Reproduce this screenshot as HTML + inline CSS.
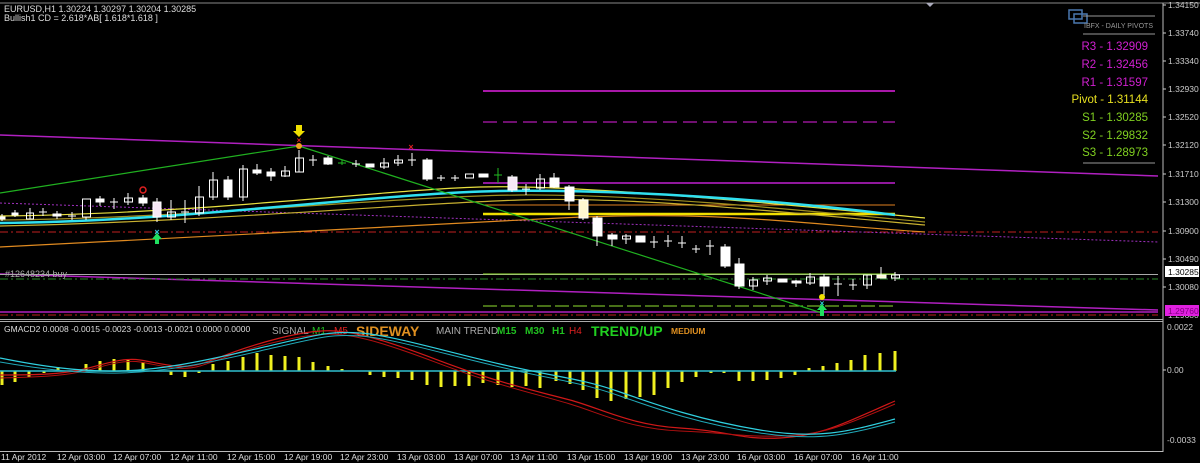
<!DOCTYPE html>
<html><head><meta charset="utf-8"><style>
html,body{margin:0;padding:0;background:#000;width:1200px;height:463px;overflow:hidden}
svg{display:block}
text{font-family:"Liberation Sans",sans-serif}
</style></head><body>
<svg width="1200" height="463" viewBox="0 0 1200 463" xmlns="http://www.w3.org/2000/svg">
<rect width="1200" height="463" fill="#000"/>
<!-- frame -->
<line x1="0" y1="3" x2="1200" y2="3" stroke="#888" stroke-width="1"/>
<polygon points="926,3 934,3 930,7" fill="#aab"/>
<line x1="1163" y1="3" x2="1163" y2="452" stroke="#bbb"/>
<line x1="0" y1="319.5" x2="1163" y2="319.5" stroke="#aaa"/>
<line x1="0" y1="321.5" x2="1163" y2="321.5" stroke="#aaa"/>
<line x1="0" y1="451.5" x2="1163" y2="451.5" stroke="#bbb"/>

<!-- header text -->
<text x="4" y="12" font-size="9" fill="#ddd">EURUSD,H1  1.30224 1.30297 1.30204 1.30285</text>
<text x="4" y="21" font-size="9" fill="#ddd">Bullish1 CD = 2.618*AB[ 1.618*1.618 ]</text>

<!-- channel / horizontal lines -->
<line x1="0" y1="135" x2="1158" y2="176" stroke="#b020c0" stroke-width="1.5"/>
<line x1="0" y1="274" x2="1158" y2="310" stroke="#b020c0" stroke-width="1.5"/>
<line x1="0" y1="312" x2="1158" y2="312" stroke="#b020c0" stroke-width="1.5"/>
<line x1="0" y1="315" x2="1158" y2="315" stroke="#c02020" stroke-dasharray="8,3,2,3"/>
<line x1="0" y1="232" x2="1158" y2="232" stroke="#c02020" stroke-dasharray="8,3,2,3"/>
<line x1="0" y1="203" x2="1158" y2="242" stroke="#a030c0" stroke-dasharray="2,2"/>
<line x1="0" y1="274.5" x2="1158" y2="274.5" stroke="#aaa"/>
<line x1="0" y1="279" x2="1158" y2="279" stroke="#2a8a2a" stroke-dasharray="8,3,2,3"/>

<!-- pivot lines -->
<line x1="483" y1="91" x2="895" y2="91" stroke="#e020e0" stroke-width="1.5"/>
<line x1="483" y1="122" x2="895" y2="122" stroke="#e020e0" stroke-dasharray="14,6"/>
<line x1="483" y1="183" x2="895" y2="183" stroke="#c020d0" stroke-width="1.5"/>
<line x1="483" y1="205" x2="895" y2="205" stroke="#e08020"/>
<line x1="483" y1="214" x2="895" y2="214" stroke="#f0e000" stroke-width="2.5"/>
<line x1="483" y1="274" x2="895" y2="274" stroke="#90e030"/>
<line x1="483" y1="306" x2="895" y2="306" stroke="#90e030" stroke-dasharray="14,4"/>

<!-- MAs -->
<path d="M0,247 C200,238 400,226 560,218 S800,224 925,232" fill="none" stroke="#e08a20" stroke-width="1.2"/>
<path d="M0,226 C200,222 400,204 520,200 S800,214 925,225" fill="none" stroke="#c8b030" stroke-width="1.2"/>
<path d="M0,216 C200,214 380,190 480,187 S800,206 925,218" fill="none" stroke="#e8e040" stroke-width="1.2"/>
<path d="M0,220 C200,218 400,196 520,195 S800,210 925,222" fill="none" stroke="#a09020" stroke-width="1.2"/>
<path d="M0,223 C180,222 380,193 500,191 S780,200 895,215" fill="none" stroke="#30e0f0" stroke-width="2.5"/>

<!-- zigzag -->
<polyline points="0,193 299,146 822,313" fill="none" stroke="#20b020" stroke-width="1.2"/>

<!-- candles -->
<g stroke="#fff" stroke-width="1" fill="#fff">
<line x1="2" y1="214" x2="2" y2="221"/><rect x="-1" y="217" width="6" height="2"/>
<line x1="15" y1="210" x2="15" y2="217"/><rect x="12" y="213" width="6" height="2"/>
<line x1="30" y1="208" x2="30" y2="219"/><rect x="26.5" y="213" width="7" height="6" fill="none"/>
<line x1="43" y1="208" x2="43" y2="216"/><line x1="39" y1="212" x2="47" y2="212"/>
<line x1="57" y1="211" x2="57" y2="219"/><rect x="53" y="214" width="8" height="2"/>
<line x1="72" y1="212" x2="72" y2="220"/><line x1="68" y1="216" x2="76" y2="216"/>
<rect x="82.5" y="199" width="8" height="18" fill="none"/><line x1="86" y1="217" x2="86" y2="220"/>
<line x1="100" y1="196" x2="100" y2="206"/><rect x="96" y="199" width="8" height="3"/>
<line x1="114" y1="198" x2="114" y2="209"/><line x1="110" y1="202" x2="118" y2="202"/>
<line x1="128" y1="193" x2="128" y2="205"/><rect x="124.5" y="198" width="8" height="4" fill="none"/>
<line x1="143" y1="195" x2="143" y2="206"/><rect x="139" y="198" width="8" height="5"/>
<line x1="157" y1="198" x2="157" y2="222"/><rect x="153" y="202" width="8" height="15" fill="#f6e8f6"/>
<line x1="171" y1="200" x2="171" y2="220"/><rect x="167.5" y="212" width="8" height="5" fill="none"/>
<line x1="185" y1="200" x2="185" y2="223"/><line x1="181" y1="212" x2="189" y2="212"/>
<line x1="199" y1="186" x2="199" y2="216"/><rect x="195.5" y="197" width="8" height="16" fill="none"/>
<line x1="213" y1="172" x2="213" y2="200"/><rect x="209.5" y="180" width="8" height="17" fill="none"/>
<line x1="228" y1="176" x2="228" y2="200"/><rect x="224" y="180" width="8" height="17"/>
<line x1="243" y1="165" x2="243" y2="201"/><rect x="239.5" y="169" width="8" height="28" fill="none"/>
<line x1="257" y1="164" x2="257" y2="175"/><rect x="253" y="170" width="8" height="3"/>
<line x1="271" y1="168" x2="271" y2="181"/><rect x="267" y="172" width="8" height="4"/>
<line x1="285" y1="166" x2="285" y2="177"/><rect x="281.5" y="171" width="8" height="5" fill="none"/>
<line x1="299" y1="150" x2="299" y2="172"/><rect x="295.5" y="158" width="8" height="14" fill="none"/>
<line x1="313" y1="155" x2="313" y2="166"/><line x1="309" y1="160" x2="317" y2="160"/>
<line x1="328" y1="156" x2="328" y2="165"/><rect x="324" y="158" width="8" height="6"/>
<line x1="342" y1="160" x2="342" y2="165" stroke="#2b2"/><line x1="338" y1="163" x2="346" y2="163" stroke="#2b2"/>
<line x1="356" y1="160" x2="356" y2="167"/><line x1="352" y1="164" x2="360" y2="164"/>
<rect x="366" y="164" width="8" height="3"/>
<line x1="384" y1="158" x2="384" y2="169"/><rect x="380.5" y="163" width="8" height="4" fill="none"/>
<line x1="398" y1="155" x2="398" y2="166"/><rect x="394.5" y="160" width="8" height="3" fill="none"/>
<line x1="412" y1="153" x2="412" y2="166"/><line x1="408" y1="160" x2="416" y2="160"/>
<line x1="427" y1="158" x2="427" y2="181"/><rect x="423" y="160" width="9" height="19"/>
<line x1="441" y1="175" x2="441" y2="181"/><line x1="437" y1="178" x2="445" y2="178"/>
<line x1="455" y1="175" x2="455" y2="181"/><line x1="451" y1="178" x2="459" y2="178"/>
<rect x="465.5" y="174" width="8" height="4" fill="none"/>
<rect x="479" y="174" width="9" height="3"/>
<line x1="498" y1="168" x2="498" y2="183" stroke="#2b2"/><line x1="494" y1="175" x2="502" y2="175" stroke="#2b2"/>
<line x1="512" y1="175" x2="512" y2="192"/><rect x="508" y="177" width="9" height="13" fill="#f6e8f6"/>
<line x1="526" y1="184" x2="526" y2="195"/><line x1="522" y1="189" x2="530" y2="189"/>
<line x1="540" y1="174" x2="540" y2="190"/><rect x="536.5" y="179" width="8" height="9" fill="none"/>
<line x1="554" y1="173" x2="554" y2="188"/><rect x="550" y="178" width="9" height="9"/>
<line x1="569" y1="185" x2="569" y2="210"/><rect x="565" y="187" width="9" height="14"/>
<line x1="583" y1="198" x2="583" y2="220"/><rect x="579" y="200" width="9" height="18" fill="#fff8d0"/>
<line x1="597" y1="216" x2="597" y2="246"/><rect x="593" y="218" width="9" height="18"/>
<line x1="612" y1="233" x2="612" y2="246"/><rect x="608" y="235" width="9" height="4"/>
<line x1="626" y1="234" x2="626" y2="244"/><rect x="622.5" y="236" width="8" height="3" fill="none"/>
<rect x="636" y="236" width="9" height="6"/>
<line x1="654" y1="236" x2="654" y2="248"/><line x1="650" y1="242" x2="658" y2="242"/>
<line x1="668" y1="235" x2="668" y2="247"/><line x1="664" y1="241" x2="672" y2="241"/>
<line x1="682" y1="236" x2="682" y2="248"/><line x1="678" y1="243" x2="686" y2="243"/>
<line x1="696" y1="245" x2="696" y2="253"/><line x1="692" y1="249" x2="700" y2="249"/>
<line x1="710" y1="240" x2="710" y2="255"/><line x1="706" y1="246" x2="714" y2="246"/>
<line x1="725" y1="244" x2="725" y2="268"/><rect x="721" y="247" width="9" height="19"/>
<line x1="739" y1="258" x2="739" y2="289"/><rect x="735" y="264" width="9" height="22"/>
<line x1="753" y1="277" x2="753" y2="290"/><rect x="749.5" y="280" width="8" height="6" fill="none"/>
<line x1="767" y1="275" x2="767" y2="285"/><rect x="763.5" y="278" width="8" height="3" fill="none"/>
<rect x="778" y="279" width="9" height="3"/>
<line x1="796" y1="280" x2="796" y2="287"/><rect x="792" y="281" width="9" height="2"/>
<line x1="810" y1="273" x2="810" y2="285"/><rect x="806.5" y="277" width="8" height="6" fill="none"/>
<line x1="824" y1="274" x2="824" y2="297"/><rect x="820" y="277" width="9" height="9"/>
<line x1="838" y1="276" x2="838" y2="296"/><line x1="834" y1="284" x2="842" y2="284"/>
<line x1="853" y1="279" x2="853" y2="290"/><line x1="849" y1="285" x2="857" y2="285"/>
<line x1="867" y1="275" x2="867" y2="289"/><rect x="863.5" y="275" width="8" height="10" fill="none"/>
<line x1="881" y1="267" x2="881" y2="276"/><rect x="877" y="275" width="9" height="3" fill="#fff8d0"/>
<rect x="891.5" y="275" width="8" height="3" fill="none"/><line x1="895" y1="272" x2="895" y2="281"/>
</g>

<!-- markers -->
<path d="M296,125 L302,125 L302,131 L305,131 L299,137 L293,131 L296,131Z" fill="#f0e000"/>
<text x="299" y="143" font-size="8" fill="#e02020" text-anchor="middle" font-weight="bold">×</text>
<circle cx="299" cy="146" r="3" fill="#f0a020"/>
<circle cx="143" cy="190" r="3" fill="none" stroke="#e02020" stroke-width="1.5"/>
<text x="411" y="150" font-size="9" fill="#e02020" text-anchor="middle" font-weight="bold">×</text>
<text x="157" y="235" font-size="9" fill="#30d0e0" text-anchor="middle" font-weight="bold">×</text>
<path d="M157,233 L162,239 L159,239 L159,244 L155,244 L155,239 L152,239Z" fill="#20e060"/>
<circle cx="822" cy="297" r="3" fill="#f0e000"/>
<text x="822" y="306" font-size="8" fill="#30d0e0" text-anchor="middle" font-weight="bold">×</text>
<path d="M822,304 L827,310 L824,310 L824,316 L820,316 L820,310 L817,310Z" fill="#20e060"/>

<text x="5" y="277" font-size="9" fill="#aaa">#12648234 buy</text>

<!-- pivots panel -->
<rect x="1069" y="10" width="13" height="9" fill="none" stroke="#4a78b0" stroke-width="1.5"/>
<rect x="1074" y="14" width="13" height="9" fill="none" stroke="#4a78b0" stroke-width="1.5"/>
<line x1="1083" y1="16" x2="1155" y2="16" stroke="#999"/>
<line x1="1083" y1="34" x2="1155" y2="34" stroke="#999"/>
<line x1="1083" y1="163" x2="1155" y2="163" stroke="#999"/>
<text x="1084" y="28" font-size="7" fill="#999">IBFX - DAILY PIVOTS</text>
<g font-size="11.5" text-anchor="end">
<text x="1148" y="50" fill="#d020d0">R3 - 1.32909</text>
<text x="1148" y="68" fill="#d020d0">R2 - 1.32456</text>
<text x="1148" y="86" fill="#d020d0">R1 - 1.31597</text>
<text x="1148" y="103" fill="#e8e020">Pivot - 1.31144</text>
<text x="1148" y="121" fill="#80d020">S1 - 1.30285</text>
<text x="1148" y="139" fill="#80d020">S2 - 1.29832</text>
<text x="1148" y="156" fill="#80d020">S3 - 1.28973</text>
</g>

<!-- right axis -->
<g font-size="8.5" fill="#ccc" stroke="#ccc">
<g stroke-width="1">
<line x1="1163" y1="5" x2="1166" y2="5"/><line x1="1163" y1="33" x2="1166" y2="33"/><line x1="1163" y1="61" x2="1166" y2="61"/><line x1="1163" y1="89" x2="1166" y2="89"/><line x1="1163" y1="117" x2="1166" y2="117"/><line x1="1163" y1="145" x2="1166" y2="145"/><line x1="1163" y1="174" x2="1166" y2="174"/><line x1="1163" y1="202" x2="1166" y2="202"/><line x1="1163" y1="231" x2="1166" y2="231"/><line x1="1163" y1="259" x2="1166" y2="259"/><line x1="1163" y1="287" x2="1166" y2="287"/><line x1="1163" y1="370" x2="1166" y2="370"/>
</g>
<g stroke="none">
<text x="1168" y="8">1.34150</text>
<text x="1168" y="36">1.33740</text>
<text x="1168" y="64">1.33340</text>
<text x="1168" y="92">1.32930</text>
<text x="1168" y="120">1.32520</text>
<text x="1168" y="148">1.32120</text>
<text x="1168" y="177">1.31710</text>
<text x="1168" y="205">1.31300</text>
<text x="1168" y="234">1.30900</text>
<text x="1168" y="262">1.30490</text>
<text x="1168" y="290">1.30080</text>
<text x="1168" y="318">1.29680</text>
<rect x="1165" y="266" width="34" height="11" fill="#fff"/>
<text x="1168" y="275" fill="#000">1.30285</text>
<rect x="1165" y="305" width="34" height="11" fill="#e020e0"/>
<text x="1168" y="314" fill="#800080">1.29760</text>
<text x="1167" y="330">0.0022</text>
<text x="1167" y="373">0.00</text>
<text x="1167" y="443">-0.0033</text>
</g>
</g>

<!-- indicator pane -->
<text x="4" y="332" font-size="8.5" fill="#ddd">GMACD2 0.0008 -0.0015 -0.0023 -0.0013 -0.0021 0.0000 0.0000</text>
<g font-size="10">
<text x="272" y="334" fill="#aaa">SIGNAL</text>
<text x="312" y="334" fill="#20c020">M1</text>
<text x="334" y="334" fill="#e02020">M5</text>
<text x="356" y="336" fill="#e09020" font-size="14" font-weight="bold">SIDEWAY</text>
<text x="436" y="334" fill="#aaa">MAIN TREND</text>
<text x="497" y="334" fill="#20c020" font-weight="bold">M15</text>
<text x="525" y="334" fill="#20c020" font-weight="bold">M30</text>
<text x="552" y="334" fill="#20c020" font-weight="bold">H1</text>
<text x="569" y="334" fill="#e02020">H4</text>
<text x="591" y="336" fill="#20d020" font-size="14" font-weight="bold">TREND/UP</text>
<text x="671" y="334" fill="#e09020" font-size="8.5" font-weight="bold">MEDIUM</text>
</g>

<g stroke="#f0f020" stroke-width="3">
<line x1="2" y1="371" x2="2" y2="385"/><line x1="15" y1="371" x2="15" y2="382"/><line x1="29" y1="371" x2="29" y2="377"/><line x1="44" y1="371" x2="44" y2="373"/>
<line x1="58" y1="371" x2="58" y2="367"/><line x1="86" y1="371" x2="86" y2="364"/><line x1="100" y1="371" x2="100" y2="361"/><line x1="114" y1="371" x2="114" y2="359"/><line x1="128" y1="371" x2="128" y2="360"/><line x1="143" y1="371" x2="143" y2="362"/>
<line x1="171" y1="371" x2="171" y2="375"/><line x1="185" y1="371" x2="185" y2="377"/><line x1="199" y1="371" x2="199" y2="373"/>
<line x1="213" y1="371" x2="213" y2="364"/><line x1="228" y1="371" x2="228" y2="361"/><line x1="243" y1="371" x2="243" y2="357"/><line x1="257" y1="371" x2="257" y2="353"/><line x1="271" y1="371" x2="271" y2="355"/><line x1="285" y1="371" x2="285" y2="356"/><line x1="299" y1="371" x2="299" y2="357"/><line x1="313" y1="371" x2="313" y2="362"/><line x1="328" y1="371" x2="328" y2="366"/><line x1="342" y1="371" x2="342" y2="369"/>
<line x1="370" y1="371" x2="370" y2="375"/><line x1="384" y1="371" x2="384" y2="377"/><line x1="398" y1="371" x2="398" y2="378"/><line x1="412" y1="371" x2="412" y2="380"/><line x1="427" y1="371" x2="427" y2="385"/><line x1="441" y1="371" x2="441" y2="387"/><line x1="455" y1="371" x2="455" y2="386"/><line x1="469" y1="371" x2="469" y2="386"/><line x1="483" y1="371" x2="483" y2="383"/><line x1="498" y1="371" x2="498" y2="385"/><line x1="512" y1="371" x2="512" y2="387"/><line x1="526" y1="371" x2="526" y2="386"/><line x1="540" y1="371" x2="540" y2="388"/><line x1="556" y1="371" x2="556" y2="381"/><line x1="570" y1="371" x2="570" y2="384"/><line x1="583" y1="371" x2="583" y2="390"/><line x1="597" y1="371" x2="597" y2="398"/><line x1="611" y1="371" x2="611" y2="401"/><line x1="626" y1="371" x2="626" y2="399"/><line x1="640" y1="371" x2="640" y2="397"/><line x1="654" y1="371" x2="654" y2="395"/><line x1="668" y1="371" x2="668" y2="388"/><line x1="682" y1="371" x2="682" y2="382"/><line x1="696" y1="371" x2="696" y2="377"/><line x1="711" y1="371" x2="711" y2="373"/><line x1="724" y1="371" x2="724" y2="373"/><line x1="739" y1="371" x2="739" y2="381"/><line x1="753" y1="371" x2="753" y2="381"/><line x1="767" y1="371" x2="767" y2="380"/><line x1="781" y1="371" x2="781" y2="378"/><line x1="795" y1="371" x2="795" y2="375"/>
<line x1="809" y1="371" x2="809" y2="368"/><line x1="823" y1="371" x2="823" y2="366"/><line x1="837" y1="371" x2="837" y2="363"/><line x1="851" y1="371" x2="851" y2="360"/><line x1="865" y1="371" x2="865" y2="355"/><line x1="880" y1="371" x2="880" y2="353"/><line x1="895" y1="371" x2="895" y2="351"/>
</g>
<line x1="0" y1="371" x2="896" y2="371" stroke="#30c0d0" stroke-width="1.5"/>

<path d="M0,375 C40,375 60,374 80,370 S120,357 140,360 S180,370 200,364 S240,348 280,338 S340,328 380,340 S440,362 480,375 S540,392 570,400 S630,425 680,428 S740,440 780,438 S840,425 895,401" fill="none" stroke="#d01818" stroke-width="1.2"/>
<path d="M0,378 C40,377 60,376 80,372 S120,359 140,362 S180,372 200,366 S240,350 280,341 S340,331 380,343 S440,365 480,378 S540,395 570,404 S630,429 680,431 S740,437 780,436 S840,428 895,404" fill="none" stroke="#b01010" stroke-width="1"/>
<path d="M0,358 C40,366 80,372 120,371 S200,362 260,348 S330,331 360,333 S440,350 500,364 S580,378 620,392 S700,420 760,430 S850,431 895,419" fill="none" stroke="#30d0e0" stroke-width="1.2"/>
<path d="M0,362 C40,369 80,374 120,373 S200,365 260,351 S330,334 360,336 S440,353 500,367 S580,382 620,396 S700,424 760,433 S850,434 895,422" fill="none" stroke="#20a8b8" stroke-width="1"/>

<!-- time axis -->
<g font-size="8.5" fill="#ddd">
<text x="1" y="460">11 Apr 2012</text>
<text x="57" y="460">12 Apr 03:00</text>
<text x="113" y="460">12 Apr 07:00</text>
<text x="170" y="460">12 Apr 11:00</text>
<text x="227" y="460">12 Apr 15:00</text>
<text x="284" y="460">12 Apr 19:00</text>
<text x="340" y="460">12 Apr 23:00</text>
<text x="397" y="460">13 Apr 03:00</text>
<text x="454" y="460">13 Apr 07:00</text>
<text x="510" y="460">13 Apr 11:00</text>
<text x="567" y="460">13 Apr 15:00</text>
<text x="624" y="460">13 Apr 19:00</text>
<text x="681" y="460">13 Apr 23:00</text>
<text x="737" y="460">16 Apr 03:00</text>
<text x="794" y="460">16 Apr 07:00</text>
<text x="851" y="460">16 Apr 11:00</text>
</g>
</svg>
</body></html>
